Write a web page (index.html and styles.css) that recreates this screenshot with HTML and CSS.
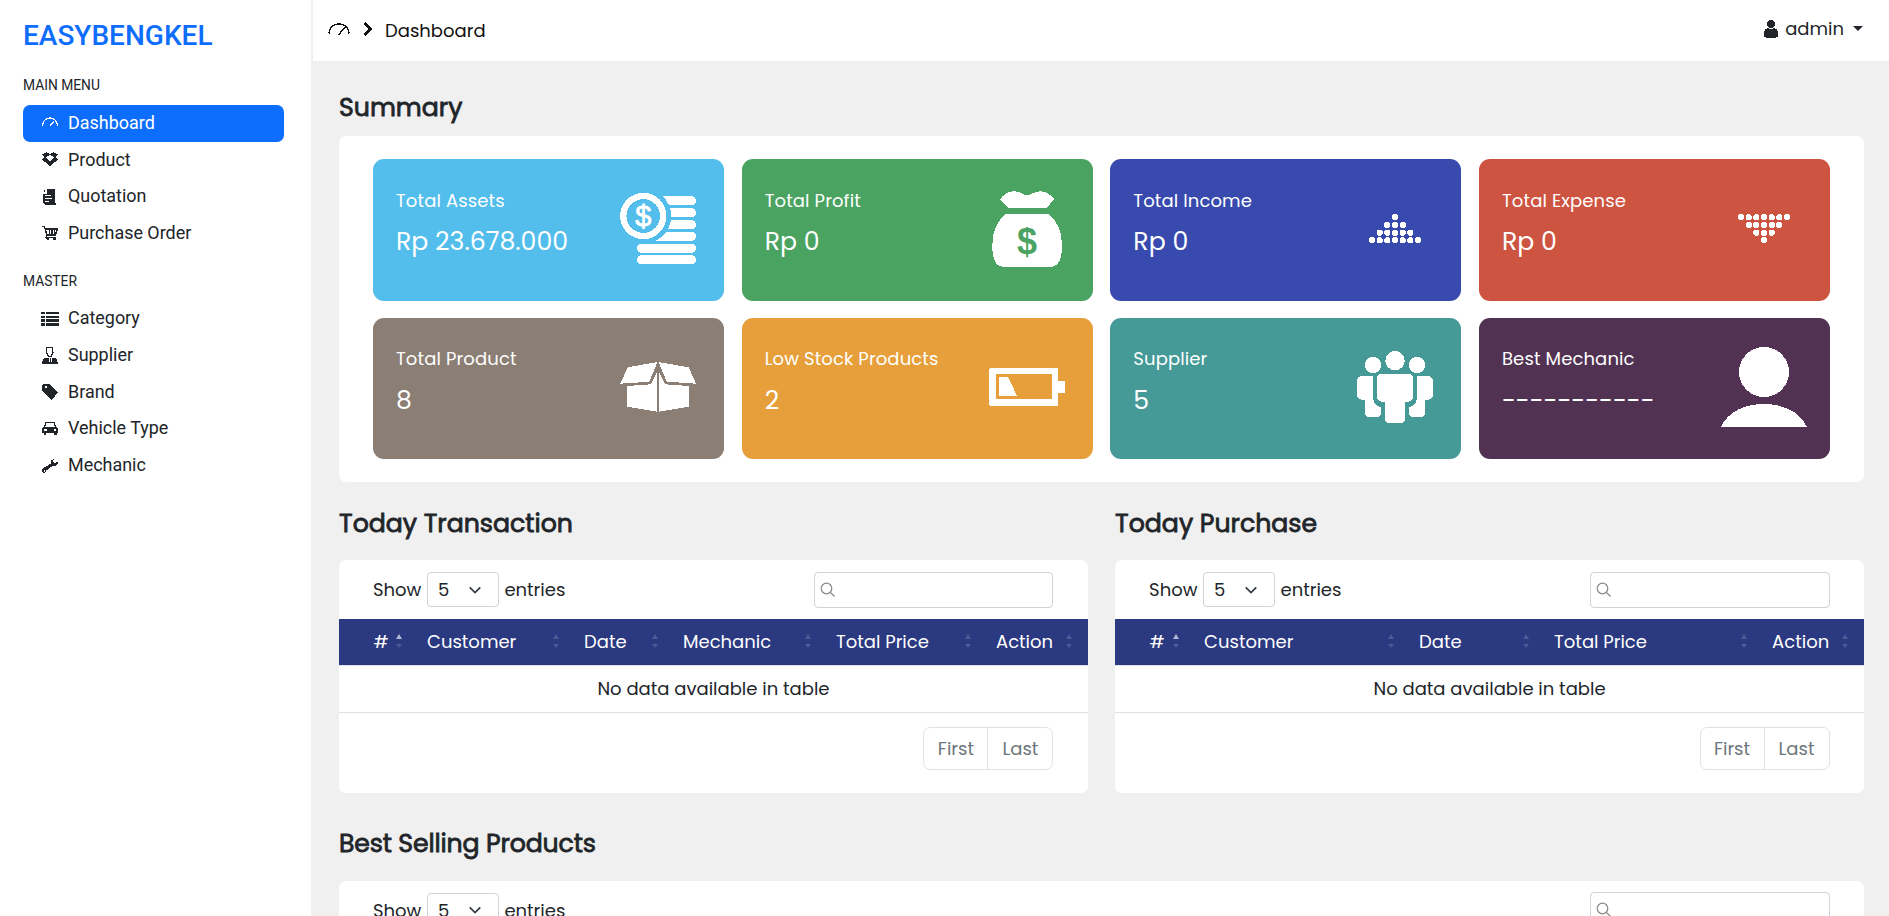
FILE: index.html
```
<!DOCTYPE html>
<html lang="en">
<head>
<meta charset="utf-8">
<title>EASYBENGKEL</title>
<link rel="stylesheet" href="styles.css">
</head>
<body>
<div class="app">
  <aside class="sidebar">
    <div class="brand">EASYBENGKEL</div>
    <div class="menu-label">MAIN MENU</div>
    <nav class="menu">
      <a class="item active"><svg class="ic" viewBox="0 0 18 18"><path d="M1.4 11.5C2 7 5 4 9 4s7 3 7.600 7.500M9 12l4-4.500" fill="none" stroke="currentColor" stroke-width="1.300"/></svg>Dashboard</a>
      <a class="item"><svg class="ic up" viewBox="0 0 18 18"><path d="M5.500 2 9 4.200 12.500 2 17 4.600 14.600 7 17 9.500 9 16 1 9.500 3.400 7 1 4.600zM9 4.800 4.800 7.200 9 11l4.200-3.800z" fill-rule="evenodd"/></svg>Product</a>
      <a class="item"><svg class="ic" viewBox="0 0 18 18"><path d="M6 1H14v14l1 1-1 1H4L2 15V6h4zM4 2v2H2.500v-1zM4 7v1h6V7zm0 3v1h7v-1zm0 3v1h4v-1z" fill-rule="evenodd"/></svg>Quotation</a>
      <a class="item"><svg class="ic" viewBox="0 0 18 18"><path d="M1 2.500h2.500L6 11.500h9M4.500 5h12l-2 5.500H6M8.500 5v5M11 5v5M13.500 5v5M6 11.500l-1 2h10" fill="none" stroke="currentColor" stroke-width="1.400"/><circle cx="7" cy="14.500" r="1.500"/><circle cx="13.500" cy="14.500" r="1.500"/></svg>Purchase Order</a>
    </nav>
    <div class="menu-label master">MASTER</div>
    <nav class="menu">
      <a class="item"><svg class="ic" viewBox="0 0 18 18"><path d="M0 2h4v2H0zM5 2h13v2H5zM0 6h4v2H0zM5 6h13v2H5zM0 9h4v3H0zM5 9h13v3H5zM0 13h4v3H0zM5 13h13v3H5z"/></svg>Category</a>
      <a class="item"><svg class="ic" viewBox="0 0 18 18"><path d="M6 1.500h5.500l.5 5-2 4H7.500l-2-4z" fill="none" stroke="currentColor" stroke-width="1.200"/><path d="M6 11.500h1.500L8 16h1v-4h1v4h.5l1-4.500H13l3 1.500 1 5H1l1-5z"/></svg>Supplier</a>
      <a class="item"><svg class="ic" viewBox="0 0 18 18"><path d="M2 1h6l9 8.500L10.500 17 1 8V2zm1.500 2v2h2V3z" fill-rule="evenodd"/></svg>Brand</a>
      <a class="item"><svg class="ic" viewBox="0 0 18 18"><path d="M4.500 2h9L15 7l2 1.500V13h-1.500v2H13v-2H5v2H2.500v-2H1V8.500L3 7zM5.500 3.300 4.300 7h9.400l-1.200-3.700zM3 9v1.500h2.500V9zm9.500 0v1.500H15V9z" fill-rule="evenodd"/></svg>Vehicle Type</a>
      <a class="item"><svg class="ic" viewBox="0 0 18 18"><path d="M17 4.500l-3 1.500-2-1 1-3-3 1v3.500L4 10l-3 2v3l2 1.500 2.500-3 6-4.500h3.500L17 6.500zM2.500 13h1.200v1.500H2.500z" fill-rule="evenodd"/></svg>Mechanic</a>
    </nav>
  </aside>

  <div class="page">
    <header class="topbar">
      <div class="crumbs">
        <svg class="gauge" viewBox="0 0 22 18"><path d="M.8 13.500C1.500 7.500 5.500 4 11 4s9.500 3.500 10.200 9.500M10.500 15l6.500-8" fill="none" stroke="currentColor" stroke-width="1.500"/></svg>
        <svg class="chev" viewBox="0 0 10 16"><path d="M1.500 1.800 7.500 8l-6 6.200" fill="none" stroke="currentColor" stroke-width="3.200"/></svg>
        <span>Dashboard</span>
      </div>
      <div class="user">
        <svg class="user-ic" viewBox="0 0 14 18"><circle cx="7" cy="4" r="4"/><path d="M0 17v-4.500C0 10 2 8.500 4 8l3 1.500L10 8c2 .5 4 2 4 4.500V17l-4 1H4z"/></svg>
        <span>admin</span><i class="caret"></i>
      </div>
    </header>

    <main class="content">
      <h2>Summary</h2>
      <section class="panel tiles">
        <div class="tile sky"><div><p>Total Assets</p><b>Rp 23.678.000</b></div>
          <svg viewBox="0 0 100 100"><rect x="35" y="17" width="53" height="9.300" rx="4.600"/><rect x="35" y="29" width="53" height="9.300" rx="4.600"/><rect x="35" y="41" width="53" height="9.300" rx="4.600"/><rect x="35" y="52.500" width="53" height="9.300" rx="4.600"/><rect x="29" y="64.500" width="59" height="9.300" rx="4.600"/><rect x="29" y="76" width="59" height="9.300" rx="4.600"/><circle cx="35.300" cy="37" r="27.800" fill="#53bdeb"/><circle cx="35.300" cy="37" r="20" fill="none" stroke="#fff" stroke-width="6.300"/><text class="dollar coin" x="35.300" y="47" font-size="29">$</text></svg></div>
        <div class="tile green"><div><p>Total Profit</p><b>Rp 0</b></div>
          <svg viewBox="0 0 100 100"><path d="M23 20.300Q29 12.300 37 12.300 41 12.300 45 14.600 50 17.500 55 14.600 59 12.300 63 12.300 71 12.300 77.300 20.300L69.300 29H31zM29 35H71.300C80 42 85 52 85 66 85 80 82 88 73 88H27.300C18 88 15.300 80 15.300 66 15.300 52 20 42 29 35z"/><text class="dollar bag" x="50" y="75" font-size="36">$</text></svg></div>
        <div class="tile indigo"><div><p>Total Income</p><b>Rp 0</b></div>
          <svg viewBox="0 0 100 100"><path class="dots" d="M50 38.300h0M42.300 46h0M50 46h0M57.700 46h0M34.700 53.700h0M42.300 53.700h0M50 53.700h0M57.700 53.700h0M65.300 53.700h0M27 61.300h0M34.700 61.300h0M42.300 61.300h0M50 61.300h0M57.700 61.300h0M65.300 61.300h0M73 61.300h0"/></svg></div>
        <div class="tile red"><div><p>Total Expense</p><b>Rp 0</b></div>
          <svg viewBox="0 0 100 100"><path class="dots" d="M50 61.300h0M42.300 53.700h0M50 53.700h0M57.700 53.700h0M34.700 46h0M42.300 46h0M50 46h0M57.700 46h0M65.300 46h0M27 38.300h0M34.700 38.300h0M42.300 38.300h0M50 38.300h0M57.700 38.300h0M65.300 38.300h0M73 38.300h0"/></svg></div>
        <div class="tile lower brown"><div><p>Total Product</p><b>8</b></div>
          <svg viewBox="0 0 100 100"><path d="M19.700 29.300 49.500 24 41.300 43.700 12.300 45.700zM80.700 29.300 50.500 24 58.700 43.700 88 45.700zM19 48 43 46.300 49 33.500V73.700L19 68.700zM81 48 57 46.300 51 33.500V73.700L81 68.700z"/></svg></div>
        <div class="tile lower orange"><div><p>Low Stock Products</p><b>2</b></div>
          <svg viewBox="0 0 100 100"><path fill-rule="evenodd" d="M13 30H81V42.700H88V55.300H81V68H13L12 67V31zM19 36V61H75V36zM22 39H31L40 57.700H22z"/></svg></div>
        <div class="tile lower teal"><div><p>Supplier</p><b>5</b></div>
          <svg viewBox="0 0 100 100"><circle cx="50" cy="22.700" r="9.700"/><circle cx="28" cy="27" r="8.200"/><circle cx="72" cy="27" r="8.200"/><path d="M36 36H64Q68 36 68 40V58Q68 64 60 64V80Q60 85.300 55 85.300H45Q40 85.300 40 80V64Q32 64 32 58V40Q32 36 36 36zM28 38V60Q29 68 36 69V74Q36 79 31 79H25Q20 79 20 74V62Q12 62 12 56V44Q12 38 18 38zM72 38V60Q71 68 64 69V74Q64 79 69 79H75Q80 79 80 74V62Q88 62 88 56V44Q88 38 82 38z"/></svg></div>
        <div class="tile lower plum"><div><p>Best Mechanic</p><b class="dash">-----------</b></div>
          <svg viewBox="0 0 100 100"><circle cx="50" cy="34" r="25"/><path d="M7 89C14 73 32 66 50 66S86 73 93 89z"/></svg></div>
      </section>

      <div class="cols">
        <div>
          <h2>Today Transaction</h2>
          <section class="panel data">
            <div class="tools"><span>Show</span><span class="select">5<svg viewBox="0 0 16 16"><path d="m2 5 6 6 6-6"/></svg></span><span>entries</span><span class="search"><svg viewBox="0 0 16 16"><circle cx="6.500" cy="6.500" r="5.300"/><path d="m10.500 10.500 4 4"/></svg></span></div>
            <table>
              <colgroup><col class="c79"><col class="c157"><col class="c99"><col class="c153"><col class="c160"><col></colgroup>
              <thead><tr><th>#<i class="sort asc"></i></th><th>Customer<i class="sort"></i></th><th>Date<i class="sort"></i></th><th>Mechanic<i class="sort"></i></th><th>Total Price<i class="sort"></i></th><th>Action<i class="sort"></i></th></tr></thead>
              <tbody><tr><td colspan="6">No data available in table</td></tr></tbody>
            </table>
            <div class="pager"><span>First</span><span>Last</span></div>
          </section>
        </div>
        <div>
          <h2>Today Purchase</h2>
          <section class="panel data">
            <div class="tools"><span>Show</span><span class="select">5<svg viewBox="0 0 16 16"><path d="m2 5 6 6 6-6"/></svg></span><span>entries</span><span class="search"><svg viewBox="0 0 16 16"><circle cx="6.500" cy="6.500" r="5.300"/><path d="m10.500 10.500 4 4"/></svg></span></div>
            <table>
              <colgroup><col class="c80"><col class="c215"><col class="c135"><col class="c218"><col></colgroup>
              <thead><tr><th>#<i class="sort asc"></i></th><th>Customer<i class="sort"></i></th><th>Date<i class="sort"></i></th><th>Total Price<i class="sort"></i></th><th>Action<i class="sort"></i></th></tr></thead>
              <tbody><tr><td colspan="5">No data available in table</td></tr></tbody>
            </table>
            <div class="pager"><span>First</span><span>Last</span></div>
          </section>
        </div>
      </div>

      <h2 class="best">Best Selling Products</h2>
      <section class="panel data">
        <div class="tools last"><span>Show</span><span class="select">5<svg viewBox="0 0 16 16"><path d="m2 5 6 6 6-6"/></svg></span><span>entries</span><span class="search"><svg viewBox="0 0 16 16"><circle cx="6.500" cy="6.500" r="5.300"/><path d="m10.500 10.500 4 4"/></svg></span></div>
      </section>
    </main>
  </div>
</div>
</body>
</html>
```
FILE: styles.css
```
* { box-sizing: border-box; }
html { overflow: hidden; }
body {
  margin: 0;
  height: 916px;
  overflow: hidden;
  background: #f0f0f0;
  color: #212529;
  font: 400 18px/27px Poppins, Inter, "Open Sans", sans-serif;
}
p, h2 { margin: 0; }
svg { fill: currentColor; flex: none; shape-rendering: crispEdges; }

.app { display: flex; height: 916px; overflow: hidden; }

.sidebar {
  width: 311px;
  flex: none;
  background: #fff;
  padding: 19px 27px 0 23px;
  font-family: Roboto, sans-serif;
}
.brand {
  color: #0d6efd;
  font-size: 28px;
  font-weight: 500;
  line-height: 34px;
}
.menu-label { font-size: 13.8px; line-height: 20px; margin: 22px 0 10px; }
.menu-label.master { margin: 19px 0 9.7px; }
.item {
  display: flex;
  align-items: center;
  gap: 9px;
  height: 36.7px;
  padding: 0 18px 2px;
  border-radius: 7px;
  font-size: 17.95px;
}
.item.active { background: #0d6efd; color: #fff; }
.ic { width: 18px; height: 18px; position: relative; top: 1px; }
.ic.up { top: 0; }

.page { flex: 1; min-width: 0; margin-left: 2px; }
.topbar {
  height: 61px;
  background: #fff;
  display: flex;
  justify-content: space-between;
  padding: 0 26px 0 15px;
}
.crumbs { display: flex; align-items: center; color: #111; }
.gauge { width: 22px; height: 18px; margin-bottom: 4px; }
.chev { width: 10px; height: 16px; margin: 0 12px 3px 13px; }
.user { display: flex; align-items: center; padding-bottom: 4px; }
.user-ic { width: 14px; height: 18px; margin-right: 7px; }
.caret {
  margin-left: 9px;
  border: 5px solid transparent;
  border-top-color: currentColor;
  border-bottom: 0;
}

.content { padding: 32px 25px 0 26px; }
h2 { font-size: 25.2px; line-height: 30px; font-weight: 400; -webkit-text-stroke: .8px currentColor; }
.panel { background: #fff; border-radius: 7px; }
.tiles {
  margin-top: 13px;
  height: 346px;
  padding: 23px 34px;
  display: grid;
  grid-template-columns: repeat(4, 351px);
  grid-template-rows: 142px 141px;
  justify-content: space-between;
  gap: 17px 0;
}
.tile {
  border-radius: 11px;
  color: #fff;
  display: flex;
  justify-content: space-between;
  padding: 20px 16px 0 23px;
}
.tile p { margin-top: 8px; letter-spacing: .12px; }
.tile b { display: block; font-weight: 400; font-size: 25.2px; line-height: 30px; margin-top: 13px; }
.tile.lower p { margin-top: 7px; }
.tile.lower b { margin-top: 14px; }
.tile svg { width: 100px; height: 100px; }
.tile .dash { white-space: nowrap; }
.sky { background: #53bdeb; }
.green { background: #4aa361; }
.indigo { background: #384aae; }
.red { background: #cd5441; }
.brown { background: #8b7e74; }
.orange { background: #e69f3b; }
.teal { background: #459a97; }
.plum { background: #513252; }
.dots { fill: none; stroke: #fff; stroke-width: 6.2px; stroke-linecap: round; }
.dollar { font-family: "Liberation Sans", sans-serif; text-anchor: middle; }
.coin { fill: #fff; stroke: #fff; stroke-width: .8px; }
.bag { fill: #4aa361; font-weight: 700; }

.cols { display: grid; grid-template-columns: 1fr 1fr; gap: 27.2px; margin-top: 27px; }
.data { margin-top: 21px; height: 233px; }
.tools { display: flex; align-items: center; height: 59px; padding: 0 34.5px 0 34px; }
.tools.last { height: 58px; padding-bottom: 0; }
.select {
  width: 71.5px;
  height: 35px;
  margin: 0 5.5px 0 6px;
  padding: 0 16px 0 9.5px;
  border: 1px solid #ced4da;
  border-radius: 4px;
  display: flex;
  align-items: center;
  justify-content: space-between;
}
.select svg { width: 14px; height: 14px; fill: none; stroke: #343a40; stroke-width: 2; shape-rendering: auto; }
.search {
  width: 239.5px;
  height: 36px;
  margin-left: auto;
  padding: 9px 5px;
  border: 1px solid #ced4da;
  border-radius: 4px;
}
.search svg { display: block; width: 16px; height: 16px; fill: none; stroke: #888; stroke-width: 1.2; shape-rendering: auto; }

table { width: 100%; table-layout: fixed; border-collapse: collapse; }
th {
  position: relative;
  height: 46px;
  padding: 0 0 0 9px;
  background: #2a3980;
  color: #fff;
  font-weight: 400;
  text-align: left;
}
th:first-child { padding-left: 34.5px; }
td { height: 47px; padding: 0; text-align: center; border: solid #dee2e6; border-width: 1px 0; }
.c79 { width: 79px; }
.c157 { width: 157px; }
.c99 { width: 99px; }
.c153 { width: 153px; }
.c160 { width: 160px; }
.c80 { width: 80px; }
.c215 { width: 215px; }
.c135 { width: 135px; }
.c218 { width: 218px; }
.sort { position: absolute; right: 16px; top: 15px; width: 6px; height: 14px; }
.sort::before, .sort::after { content: ""; position: absolute; left: 0; border: 3px solid transparent; opacity: .17; }
.sort::before { top: 0; border-top: 0; border-bottom: 5px solid #fff; }
.sort::after { bottom: 0; border-bottom: 0; border-top: 4px solid #fff; }
.sort.asc::before { opacity: .65; }

.pager { display: flex; justify-content: flex-end; padding: 14px 34.5px 0 0; color: #6c757d; }
.pager span {
  width: 65px;
  height: 43px;
  line-height: 41px;
  text-align: center;
  border: 1px solid #dee2e6;
  border-radius: 7px 0 0 7px;
}
.pager span + span { width: 66px; margin-left: -1px; border-radius: 0 7px 7px 0; }
.best { margin-top: 36px; letter-spacing: -.15px; }
.best + .data { margin-top: 22px; }
```
